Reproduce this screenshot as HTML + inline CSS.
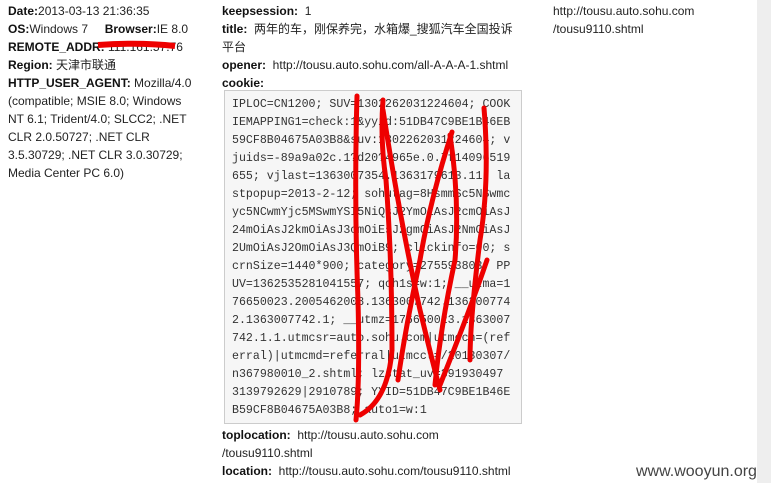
<!DOCTYPE html>
<html><head><meta charset="utf-8"><style>
body{margin:0;width:771px;height:483px;background:#fff;position:relative;overflow:hidden;font-family:"Liberation Sans","Noto Sans CJK SC",sans-serif;font-size:12px;color:#222}
.c{position:absolute;line-height:18px}
b{color:#111}
.box{position:absolute;left:224px;top:90px;width:298px;height:334px;background:#f6f6f6;border:1px solid #ccc;box-sizing:border-box}
.mono{position:absolute;left:232px;top:96px;font-family:"Liberation Mono",monospace;font-size:11.6px;line-height:18px;color:#333;white-space:pre}
.sb{position:absolute;left:757px;top:0;width:14px;height:483px;background:#eeeeee}
.wm{position:absolute;left:636px;top:463px;font-size:16px;color:#444}
</style></head><body>
<div class="c" style="left:8px;top:2px;width:190px">
<b>Date:</b>2013-03-13 21:36:35<br>
<b>OS:</b>Windows 7&nbsp;&nbsp;&nbsp;&nbsp; <b>Browser:</b>IE 8.0<br>
<b>REMOTE_ADDR:</b> 111.161.57.76<br>
<b>Region:</b> 天津市联通<br>
<b>HTTP_USER_AGENT:</b> Mozilla/4.0 (compatible; MSIE 8.0; Windows NT 6.1; Trident/4.0; SLCC2; .NET CLR 2.0.50727; .NET CLR 3.5.30729; .NET CLR 3.0.30729; Media Center PC 6.0)
</div>
<svg style="position:absolute;left:0;top:0" width="771" height="483"><path d="M98 45 Q140 42 175 46" stroke="#e00" stroke-width="6" fill="none"/></svg>
<div class="c" style="left:222px;top:2px;width:300px">
<b>keepsession:</b>&nbsp; 1<br>
<b>title:</b>&nbsp; 两年的车，刚保养完，水箱爆_搜狐汽车全国投诉平台<br>
<b>opener:</b>&nbsp; http://tousu.auto.sohu.com/all-A-A-A-1.shtml<br>
<b>cookie:</b>
</div>
<div class="box"></div>
<div class="mono">IPLOC=CN1200; SUV=1302262031224604; COOK
IEMAPPING1=check:1&amp;yyid:51DB47C9BE1B46EB
59CF8B04675A03B8&amp;suv:1302262031224604; v
juids=-89a9a02c.1?d20?4965e.0.7f14096519
655; vjlast=1363007354.1363179613.11; la
stpopup=2013-2-12; sohutag=8HsmmSc5NSwmc
yc5NCwmYjc5MSwmYSI5NiQsJ2YmOiAsJ2cmOiAsJ
24mOiAsJ2kmOiAsJ3cmOiEsJ2gmOiAsJ2NmOiAsJ
2UmOiAsJ2OmOiAsJ3QmOiB9; clickinfo=00; s
crnSize=1440*900; category=275593803; PP
UV=1362535281041557; qch1s=w:1; __utma=1
76650023.2005462008.1363007742.136300774
2.1363007742.1; __utmz=176650023.1363007
742.1.1.utmcsr=auto.sohu.com|utmccn=(ref
erral)|utmcmd=referral|utmcct=/20130307/
n367980010_2.shtml; lzstat_uv=391930497
3139792629|2910789; YYID=51DB47C9BE1B46E
B59CF8B04675A03B8; auto1=w:1</div>
<svg style="position:absolute;left:0;top:0" width="771" height="483" fill="none" stroke="#e00" stroke-width="5" stroke-linecap="round">
<path d="M357 96 Q354 200 358 300 Q360 380 356 420"/>
<path d="M383 100 Q380 140 386 180 Q392 260 392 350 Q388 400 360 415"/>
<path d="M383 110 Q400 220 420 310 Q432 360 440 390"/>
<path d="M452 132 Q430 200 420 260 Q405 330 398 380"/>
<path d="M450 135 Q460 200 455 260 Q440 330 435 385"/>
<path d="M484 108 Q490 180 480 240 Q470 320 470 360"/>
<path d="M487 260 Q470 310 440 385"/>
</svg>
<div class="c" style="left:222px;top:426px;width:300px">
<b>toplocation:</b>&nbsp; http://tousu.auto.sohu.com<br>/tousu9110.shtml<br>
<b>location:</b>&nbsp; http://tousu.auto.sohu.com/tousu9110.shtml
</div>
<div class="c" style="left:553px;top:2px;width:200px">http://tousu.auto.sohu.com<br>/tousu9110.shtml</div>
<div class="sb"></div>
<div class="wm">www.wooyun.org</div>
</body></html>
